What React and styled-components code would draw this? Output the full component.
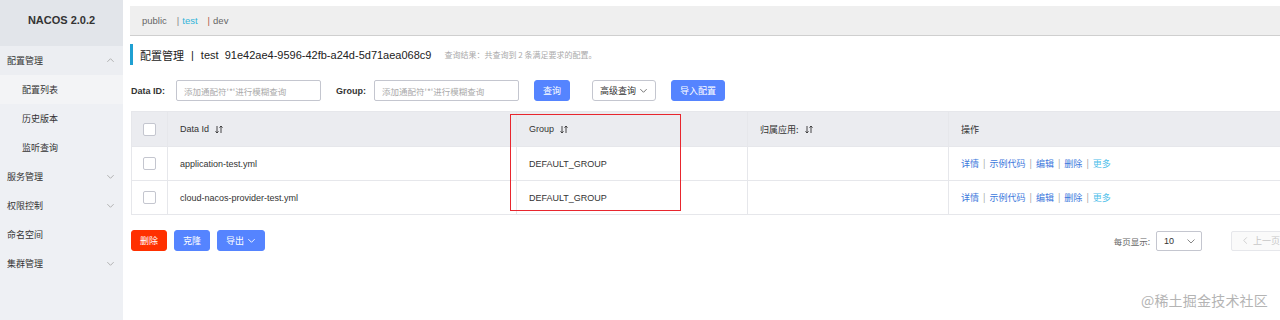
import React from 'react'
import styled, {createGlobalStyle} from 'styled-components'

const GlobalStyle = createGlobalStyle`
    body {
        margin: 0;
        background: #fff;
        font-family: "Liberation Sans", "Noto Sans CJK SC", sans-serif;
        color: #333;
    }
`

const Page = styled.div`
    display: flex;
    width: 1280px;
    height: 320px;
    overflow: hidden;
    position: relative;
`

const Sidebar = styled.div`
    width: 123px;
    flex-shrink: 0;
    background: #eef0f4;
    display: flex;
    flex-direction: column;
`

const Logo = styled.div`
    height: 46px;
    background: #e2e5ea;
    display: flex;
    align-items: center;
    justify-content: center;
    font-size: 11px;
    font-weight: bold;
    color: #333;
    padding-bottom: 6px;
    box-sizing: border-box;
`

const MenuItem = styled.div`
    height: 29px;
    display: flex;
    align-items: center;
    justify-content: space-between;
    padding: 0 8px 0 ${props => props.sub ? '22px' : '7px'};
    font-size: 9px;
    color: #333;
    background: ${props => props.active ? '#f3f4f6' : props.open ? '#eceef2' : 'transparent'};
    font-family: "Noto Sans CJK SC", sans-serif;
`

const Main = styled.div`
    flex: 1;
    padding: 6px 0 0 7px;
    overflow: hidden;
`

const NsBar = styled.div`
    height: 30px;
    background: #efefef;
    border-bottom: 1px solid #cfcfcf;
    display: flex;
    align-items: center;
    padding-left: 12px;
    font-size: 9.5px;
    color: #666;
    box-sizing: border-box;
`

const NsItem = styled.span`
    margin-right: 10px;
    color: ${props => props.active ? '#33b4d9' : '#666'};
`

const NsSep = styled.span`
    margin-right: 3px;
    color: ${props => props.color || '#888'};
`

const TitleRow = styled.div`
    margin-top: 8px;
    height: 21px;
    border-left: 3px solid #1fa0d2;
    padding-left: 7px;
    display: flex;
    align-items: center;
    font-size: 11px;
    color: #222;
`

const TitleCn = styled.span`
    font-family: "Noto Sans CJK SC", sans-serif;
    font-size: 11px;
`

const Hint = styled.span`
    margin-left: 13px;
    font-size: 8px;
    color: #aaa;
    font-family: "Noto Sans CJK SC", sans-serif;
`

const SearchRow = styled.div`
    margin-top: 15px;
    padding-left: 1px;
    display: flex;
    align-items: center;
    height: 21px;
`

const Label = styled.span`
    font-size: 9px;
    font-weight: bold;
    color: #333;
    margin-right: ${props => props.gap || 8}px;
`

const Input = styled.div`
    width: 145px;
    height: 21px;
    border: 1px solid #c4c6cf;
    border-radius: 2px;
    box-sizing: border-box;
    display: flex;
    align-items: center;
    padding-left: 7px;
    font-size: 8.5px;
    color: #aaa;
    margin-right: ${props => props.mr || 0}px;
    font-family: "Noto Sans CJK SC", sans-serif;
`

const Button = styled.div`
    height: ${props => props.h || 21}px;
    padding: 0 ${props => props.px || 8}px;
    display: inline-flex;
    align-items: center;
    gap: 3px;
    box-sizing: border-box;
    border-radius: 3px;
    font-size: 9px;
    font-family: "Noto Sans CJK SC", sans-serif;
    margin-left: ${props => props.ml || 0}px;
    background: ${props => props.kind === 'danger' ? '#ff3000' : props.kind === 'normal' ? '#fff' : '#5584ff'};
    color: ${props => props.kind === 'normal' ? '#333' : '#fff'};
    border: 1px solid ${props => props.kind === 'normal' ? '#c4c6cf' : props.kind === 'danger' ? '#ff3000' : '#5584ff'};
`

const TableWrap = styled.div`
    position: relative;
    margin-top: 10px;
    margin-left: 1px;
    width: 1200px;
`

const Table = styled.div`
    border: 1px solid #e6e7eb;
    border-right: none;
`

const Row = styled.div`
    display: grid;
    grid-template-columns: 36px 349px 231px 201px 1fr;
    height: 34px;
    background: ${props => props.head ? '#ebecf0' : '#fff'};
    border-top: ${props => props.head ? 'none' : '1px solid #e6e7eb'};
    box-sizing: border-box;
`

const Cell = styled.div`
    display: flex;
    align-items: center;
    justify-content: ${props => props.center ? 'center' : 'flex-start'};
    padding-left: ${props => props.center ? 0 : 12}px;
    border-right: 1px solid #e6e7eb;
    font-size: 9px;
    color: #333;
    gap: 6px;
`

const CnText = styled.span`
    font-family: "Noto Sans CJK SC", sans-serif;
`

const Checkbox = styled.span`
    width: 11px;
    height: 11px;
    border: 1px solid #c4c6cf;
    border-radius: 2px;
    background: #fff;
`

const Links = styled.span`
    font-family: "Noto Sans CJK SC", sans-serif;
    font-size: 9px;
    color: #3c78dc;
    display: flex;
    gap: 4px;
`

const Sep = styled.span`
    color: #999;
`

const More = styled.span`
    color: #4ec0ea;
`

const Mark = styled.div`
    position: absolute;
    left: 379px;
    top: 3px;
    width: 171px;
    height: 97px;
    border: 1.5px solid #e8262e;
    box-sizing: border-box;
`

const Footer = styled.div`
    margin-top: 15px;
    margin-left: 1px;
    width: 1160px;
    display: flex;
    align-items: center;
    justify-content: space-between;
`

const Group = styled.div`
    display: flex;
    align-items: center;
`

const PageLabel = styled.span`
    font-family: "Noto Sans CJK SC", sans-serif;
    font-size: 8.5px;
    color: #666;
    margin-right: 6px;
`

const Select = styled.div`
    width: 46px;
    height: 20px;
    border: 1px solid #c4c6cf;
    border-radius: 2px;
    box-sizing: border-box;
    display: flex;
    align-items: center;
    justify-content: space-between;
    padding: 0 5px 0 7px;
    font-size: 9px;
    color: #333;
`

const PrevBtn = styled.div`
    margin-left: 29px;
    width: 60px;
    height: 20px;
    border: 1px solid #e6e7eb;
    border-radius: 2px;
    background: #fafafa;
    box-sizing: border-box;
    display: flex;
    align-items: center;
    gap: 3px;
    padding-left: 9px;
    font-family: "Noto Sans CJK SC", sans-serif;
    font-size: 9px;
    color: #c8c8c8;
`

const Watermark = styled.div`
    position: absolute;
    right: 12px;
    bottom: 10px;
    font-family: "Noto Sans CJK SC", sans-serif;
    font-size: 14px;
    color: #b4b4b4;
    letter-spacing: 0.2px;
`

const Chevron = ({up, color = '#999', size = 8}) => (
    <svg width={size} height={size} viewBox="0 0 10 10">
        <path d={up ? 'M1.5 6.5 L5 3 L8.5 6.5' : 'M1.5 3.5 L5 7 L8.5 3.5'} fill="none" stroke={color} strokeWidth="1" />
    </svg>
)

const LeftChevron = ({color = '#ccc', size = 9}) => (
    <svg width={size} height={size} viewBox="0 0 10 10">
        <path d="M6.5 1.5 L3 5 L6.5 8.5" fill="none" stroke={color} strokeWidth="1" />
    </svg>
)

const SortIcon = () => (
    <svg width="8" height="9" viewBox="0 0 8 9">
        <path d="M2 1 V8 M0.5 6.3 L2 8 L3.5 6.3" fill="none" stroke="#333" strokeWidth="0.9" />
        <path d="M6 8 V1 M4.5 2.7 L6 1 L7.5 2.7" fill="none" stroke="#333" strokeWidth="0.9" />
    </svg>
)

const menu = [
    {name: '配置管理', open: true, caret: 'up'},
    {name: '配置列表', sub: true, active: true},
    {name: '历史版本', sub: true},
    {name: '监听查询', sub: true},
    {name: '服务管理', caret: 'down'},
    {name: '权限控制', caret: 'down'},
    {name: '命名空间'},
    {name: '集群管理', caret: 'down'},
]

const configs = ['application-test.yml', 'cloud-nacos-provider-test.yml']

const App = () => {
    return (
        <Page>
            <GlobalStyle />
            <Sidebar>
                <Logo>NACOS 2.0.2</Logo>
                {menu.map((item) => (
                    <MenuItem key={item.name} sub={item.sub} active={item.active} open={item.open}>
                        <span>{item.name}</span>
                        {item.caret && <Chevron up={item.caret === 'up'} color="#aaa" size={9} />}
                    </MenuItem>
                ))}
            </Sidebar>

            <Main>
                <NsBar>
                    <NsItem>public</NsItem>
                    <NsSep>|</NsSep><NsItem active>test</NsItem>
                    <NsSep color="#b45a4a">|</NsSep><NsItem>dev</NsItem>
                </NsBar>

                <TitleRow>
                    <TitleCn>配置管理</TitleCn>
                    <span style={{margin: '0 7px'}}>|</span>
                    <span>test&nbsp;&nbsp;91e42ae4-9596-42fb-a24d-5d71aea068c9</span>
                    <Hint>查询结果：共查询到 2 条满足要求的配置。</Hint>
                </TitleRow>

                <SearchRow>
                    <Label gap={11}>Data ID:</Label>
                    <Input mr={15}>添加通配符'*'进行模糊查询</Input>
                    <Label>Group:</Label>
                    <Input>添加通配符'*'进行模糊查询</Input>
                    <Button ml={15}>查询</Button>
                    <Button ml={22} kind="normal" px={7}>高级查询 <Chevron color="#666" size={9} /></Button>
                    <Button ml={15}>导入配置</Button>
                </SearchRow>

                <TableWrap>
                    <Table>
                        <Row head>
                            <Cell center><Checkbox /></Cell>
                            <Cell>Data Id <SortIcon /></Cell>
                            <Cell>Group <SortIcon /></Cell>
                            <Cell><CnText>归属应用:</CnText> <SortIcon /></Cell>
                            <Cell><CnText>操作</CnText></Cell>
                        </Row>
                        {configs.map((dataId) => (
                            <Row key={dataId}>
                                <Cell center><Checkbox /></Cell>
                                <Cell>{dataId}</Cell>
                                <Cell>DEFAULT_GROUP</Cell>
                                <Cell />
                                <Cell>
                                    <Links>
                                        <span>详情</span><Sep>|</Sep>
                                        <span>示例代码</span><Sep>|</Sep>
                                        <span>编辑</span><Sep>|</Sep>
                                        <span>删除</span><Sep>|</Sep>
                                        <More>更多</More>
                                    </Links>
                                </Cell>
                            </Row>
                        ))}
                    </Table>
                    <Mark />
                </TableWrap>

                <Footer>
                    <Group>
                        <Button kind="danger">删除</Button>
                        <Button ml={7}>克隆</Button>
                        <Button ml={7}>导出 <Chevron color="#fff" size={9} /></Button>
                    </Group>
                    <Group>
                        <PageLabel>每页显示:</PageLabel>
                        <Select>10 <Chevron color="#888" size={10} /></Select>
                        <PrevBtn><LeftChevron />上一页</PrevBtn>
                    </Group>
                </Footer>
            </Main>
            <Watermark>@稀土掘金技术社区</Watermark>
        </Page>
    )
}

export default App
